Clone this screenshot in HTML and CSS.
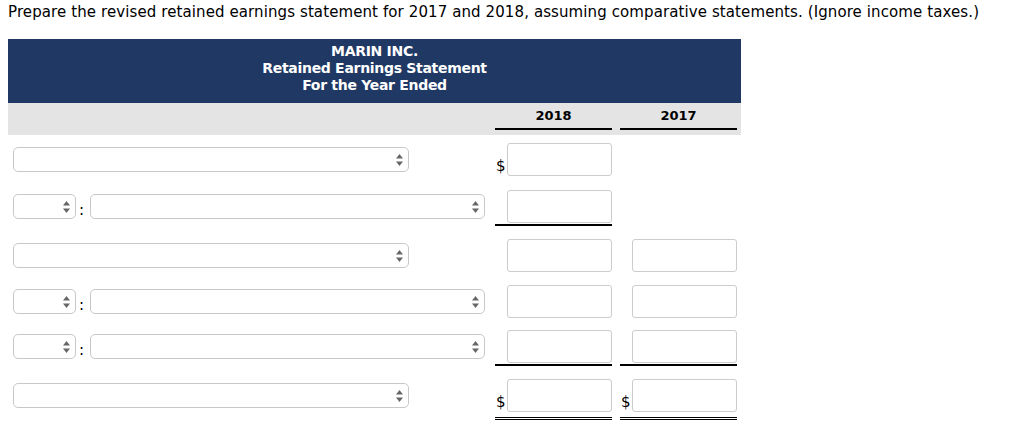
FILE: index.html
```html
<!DOCTYPE html>
<html>
<head>
<meta charset="utf-8">
<link rel="stylesheet" href="styles.css">
</head>
<body>
<p class="prompt">Prepare the revised retained earnings statement for 2017 and 2018, assuming comparative statements. (Ignore income taxes.)</p>
<div class="sheet">
  <div class="head">
    <div>MARIN INC.</div>
    <div>Retained Earnings Statement</div>
    <div>For the Year Ended</div>
  </div>
  <div class="years">
    <div></div>
    <div class="year">2018</div>
    <div class="year">2017</div>
  </div>

  <div class="row r1">
    <div class="label"><div class="sel wide"><svg width="7" height="12" viewBox="0 0 7 12"><polygon points="0,4.5 3.5,0 7,4.5" /><polygon points="0,7.5 7,7.5 3.5,12" /></svg></div></div>
    <div class="cell"><span class="dol">$</span><input class="amt" type="text"></div>
    <div></div>
  </div>

  <div class="row r2">
    <div class="label"><div class="sel small"><svg width="7" height="12" viewBox="0 0 7 12"><polygon points="0,4.5 3.5,0 7,4.5" /><polygon points="0,7.5 7,7.5 3.5,12" /></svg></div><span class="colon">:</span><div class="sel big"><svg width="7" height="12" viewBox="0 0 7 12"><polygon points="0,4.5 3.5,0 7,4.5" /><polygon points="0,7.5 7,7.5 3.5,12" /></svg></div></div>
    <div class="cell u"><span class="dol"></span><input class="amt" type="text"></div>
    <div></div>
  </div>

  <div class="row r3">
    <div class="label"><div class="sel wide"><svg width="7" height="12" viewBox="0 0 7 12"><polygon points="0,4.5 3.5,0 7,4.5" /><polygon points="0,7.5 7,7.5 3.5,12" /></svg></div></div>
    <div class="cell"><span class="dol"></span><input class="amt" type="text"></div>
    <div class="cell"><span class="dol"></span><input class="amt" type="text"></div>
  </div>

  <div class="row r4">
    <div class="label"><div class="sel small"><svg width="7" height="12" viewBox="0 0 7 12"><polygon points="0,4.5 3.5,0 7,4.5" /><polygon points="0,7.5 7,7.5 3.5,12" /></svg></div><span class="colon">:</span><div class="sel big"><svg width="7" height="12" viewBox="0 0 7 12"><polygon points="0,4.5 3.5,0 7,4.5" /><polygon points="0,7.5 7,7.5 3.5,12" /></svg></div></div>
    <div class="cell"><span class="dol"></span><input class="amt" type="text"></div>
    <div class="cell"><span class="dol"></span><input class="amt" type="text"></div>
  </div>

  <div class="row r5">
    <div class="label"><div class="sel small"><svg width="7" height="12" viewBox="0 0 7 12"><polygon points="0,4.5 3.5,0 7,4.5" /><polygon points="0,7.5 7,7.5 3.5,12" /></svg></div><span class="colon">:</span><div class="sel big"><svg width="7" height="12" viewBox="0 0 7 12"><polygon points="0,4.5 3.5,0 7,4.5" /><polygon points="0,7.5 7,7.5 3.5,12" /></svg></div></div>
    <div class="cell u"><span class="dol"></span><input class="amt" type="text"></div>
    <div class="cell u"><span class="dol"></span><input class="amt" type="text"></div>
  </div>

  <div class="row r6">
    <div class="label"><div class="sel wide"><svg width="7" height="12" viewBox="0 0 7 12"><polygon points="0,4.5 3.5,0 7,4.5" /><polygon points="0,7.5 7,7.5 3.5,12" /></svg></div></div>
    <div class="cell uu"><span class="dol">$</span><input class="amt" type="text"></div>
    <div class="cell uu"><span class="dol">$</span><input class="amt" type="text"></div>
  </div>
</div>
</body>
</html>
```

FILE: styles.css
```css
* { box-sizing: border-box; }
body {
  margin: 0;
  font-family: "DejaVu Sans", Verdana, sans-serif;
  color: #000;
  background: #fff;
}
.prompt {
  margin: 3px 0 0 8px;
  font-size: 15px;
  line-height: 18px;
  letter-spacing: 0.1px;
  white-space: nowrap;
}
.sheet {
  margin: 18px 0 0 8px;
  width: 733px;
}
.head {
  background: #203864;
  color: #fff;
  height: 64px;
  padding-top: 4px;
  text-align: center;
  font-weight: bold;
  font-size: 14px;
  letter-spacing: -0.3px;
  line-height: 17px;
}
.years {
  background: #e4e4e4;
  height: 32px;
  display: grid;
  grid-template-columns: 479px 117px 117px;
  column-gap: 8px;
  padding-top: 4px;
}
.year {
  font-weight: bold;
  font-size: 13px;
  line-height: 17px;
  text-align: center;
  height: 23px;
  border-bottom: 2px solid #000;
}
.row {
  display: grid;
  grid-template-columns: 479px 117px 117px;
  column-gap: 8px;
  align-items: start;
}
.r1 { margin-top: 8px; }
.r2 { margin-top: 14px; }
.r3 { margin-top: 13px; }
.r4 { margin-top: 13px; }
.r5 { margin-top: 12px; }
.r6 { margin-top: 13px; }
.label {
  display: flex;
  align-items: center;
  height: 33px;
  padding-left: 5px;
}
.sel {
  height: 25px;
  border: 1px solid #c8c8c8;
  border-radius: 5px;
  background: #fff;
  display: flex;
  align-items: center;
  justify-content: flex-end;
  padding-right: 5px;
}
.sel svg { fill: #666; display: block; }
.wide { width: 396px; }
.small { width: 63px; }
.big { width: 395px; }
.colon {
  width: 14px;
  padding-left: 3px;
  font-size: 15px;
  line-height: 15px;
  align-self: flex-end;
  margin-bottom: 5px;
}
.cell {
  display: flex;
  align-items: flex-end;
  height: 33px;
  box-sizing: content-box;
}
.cell.u {
  border-bottom: 2px solid #000;
  padding-bottom: 1px;
}
.cell.uu {
  border-bottom: 3px double #000;
  padding-bottom: 5px;
}
.dol {
  width: 12px;
  padding-left: 1px;
  font-size: 15px;
  line-height: 15px;
  margin-bottom: 2px;
}
.amt {
  width: 105px;
  height: 33px;
  margin: 0;
  border: 1px solid #cccccc;
  border-radius: 3px;
  background: #fff;
  padding: 0 4px;
  font: inherit;
  outline: none;
}
```
